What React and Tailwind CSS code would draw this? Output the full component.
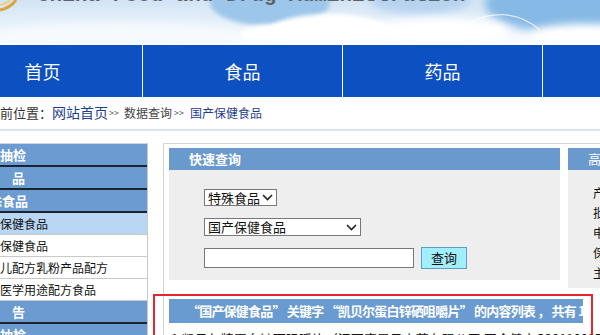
import React from 'react';

const cjk = { fontFamily: '"Noto Sans CJK SC", "Liberation Sans", sans-serif' };

const Chevron = () => (
  <svg width="11" height="7" viewBox="0 0 11 7" className="shrink-0">
    <path d="M1 1l4.5 4.5L10 1" fill="none" stroke="#222" strokeWidth="1.6" />
  </svg>
);

const Banner = () => (
  <div className="relative h-[45px] overflow-hidden">
    <svg width="600" height="45" viewBox="0 0 600 45" className="absolute inset-0">
      <defs>
        <linearGradient id="sky" x1="0" y1="0" x2="0" y2="1">
          <stop offset="0" stopColor="#d2e3f4" />
          <stop offset="0.6" stopColor="#eaf3fb" />
          <stop offset="1" stopColor="#ffffff" />
        </linearGradient>
        <filter id="soft" x="-50%" y="-50%" width="200%" height="200%">
          <feGaussianBlur stdDeviation="4" />
        </filter>
        <filter id="soft2" x="-50%" y="-50%" width="200%" height="200%">
          <feGaussianBlur stdDeviation="2" />
        </filter>
      </defs>
      <rect width="600" height="45" fill="url(#sky)" />
      <ellipse cx="270" cy="2" rx="60" ry="24" fill="#9cc6ea" filter="url(#soft2)" />
      <ellipse cx="560" cy="4" rx="75" ry="28" fill="#86b9e5" filter="url(#soft)" />
      <ellipse cx="420" cy="0" rx="50" ry="14" fill="#b5d3ef" filter="url(#soft)" />
      <ellipse cx="330" cy="30" rx="60" ry="16" fill="#ffffff" filter="url(#soft2)" />
      <ellipse cx="280" cy="34" rx="40" ry="10" fill="#ffffff" filter="url(#soft2)" />
      <ellipse cx="440" cy="32" rx="70" ry="14" fill="#ffffff" filter="url(#soft)" />
      <ellipse cx="580" cy="36" rx="50" ry="12" fill="#ffffff" filter="url(#soft)" />
      <ellipse cx="120" cy="36" rx="120" ry="12" fill="#f6fafd" filter="url(#soft)" />
      <path d="M440 40 Q500 -5 540 30" fill="none" stroke="#ffffff" strokeWidth="1.2" opacity="0.7" />
      <path d="M0 10 Q10 8 16 0" fill="none" stroke="#d9a640" strokeWidth="3" />
      <path d="M0 5 Q6 4 10 0" fill="none" stroke="#f0cf7a" strokeWidth="2" />
    </svg>
    <div
      className="absolute left-[37px] top-[-20px] text-[21px] font-bold text-[#5f6367] whitespace-nowrap"
      style={{ fontFamily: '"Liberation Mono", monospace' }}
    >
      China Food and Drug Administration
    </div>
  </div>
);

const navItems = ['首页', '食品', '药品', '医疗器械'];

const Nav = () => (
  <div className="flex h-[52px] bg-[#0d50c1] -ml-[57px] w-[800px]">
    {navItems.map((n) => (
      <div
        key={n}
        className="w-[200px] shrink-0 border-r border-white flex items-center justify-center text-white text-[18px]"
      >
        {n}
      </div>
    ))}
  </div>
);

const Breadcrumb = () => (
  <div className="relative h-[34px] border-b-2 border-[#d9e5f1] flex items-center -ml-[13px] pb-[1px]">
    <span className="text-[13px] text-[#333]">当前位置：</span>
    <span className="text-[14px] text-[#1f3e91]">网站首页</span>
    <span className="text-[9px] text-[#555] ml-[1px] mr-[5px]">&gt;&gt;</span>
    <span className="text-[12px] text-[#444]">数据查询</span>
    <span className="text-[9px] text-[#555] ml-[2px] mr-[6px]">&gt;&gt;</span>
    <span className="text-[12px] text-[#1f3e91]">国产保健食品</span>
    <span className="absolute right-[-13px] top-[12px] w-[4px] h-[9px] border border-[#333]" />
  </div>
);

const sideRows = [
  { t: '监督抽检', h: true, pl: 'pl-[16px]' },
  { t: '药　品', h: true, pl: 'pl-[28px]' },
  { t: '特殊食品', h: true, pl: 'pl-[18px]' },
  { t: '国产保健食品', sel: true },
  { t: '进口保健食品' },
  { t: '婴幼儿配方乳粉产品配方' },
  { t: '特殊医学用途配方食品' },
  { t: '公　告', h: true, pl: 'pl-[28px]' },
  { t: '监督抽检', h: true, pl: 'pl-[16px]' },
];

const Sidebar = () => (
  <div className="w-[190px] -ml-[42px] shrink-0 border-t border-[#d5d5d5] border-r border-r-[#c8c8c8]">
    {sideRows.map((r, i) =>
      r.h ? (
        <div
          key={i}
          className={`h-[23px] bg-[#6b9bd1] border-b-2 border-[#1a2430] text-white font-bold text-[13px] flex items-center ${r.pl}`}
        >
          {r.t}
        </div>
      ) : (
        <div
          key={i}
          className={`h-[22px] border-b border-[#c9c9c9] text-[12px] text-[#111] flex items-center pl-[18px] ${
            r.sel ? 'bg-[#b9d6f4]' : 'bg-white'
          }`}
        >
          {r.t}
        </div>
      )
    )}
  </div>
);

const QuickPanel = () => (
  <div className="w-[391px] shrink-0">
    <div className="h-[22px] bg-[#6999cd] text-white font-bold text-[13px] flex items-center pl-[20px]">快速查询</div>
    <div className="h-[110px] bg-[#eeeeee] pl-[35px] pt-[19px] flex flex-col gap-[12px]">
      <div className="w-[73px] h-[17px] bg-white border border-[#777] flex items-center justify-between px-[3px] text-[13px] text-[#111]">
        <span>特殊食品</span>
        <Chevron />
      </div>
      <div className="w-[157px] h-[18px] bg-white border border-[#777] flex items-center justify-between px-[3px] text-[13px] text-[#111]">
        <span>国产保健食品</span>
        <Chevron />
      </div>
      <div className="flex items-center gap-[7px] -mt-[1px]">
        <div className="w-[210px] h-[20px] bg-white border border-[#777]" />
        <div className="w-[46px] h-[22px] bg-[#a3eefb] border border-[#5b9fc4] flex items-center justify-center text-[13px] text-[#111]">
          查询
        </div>
      </div>
    </div>
  </div>
);

const AdvPanel = () => (
  <div className="w-[200px] shrink-0">
    <div className="h-[22px] bg-[#6999cd] text-white text-[13px] flex items-center pl-[20px]">高级查询</div>
    <div className="h-[118px] bg-[#eeeeee] pl-[25px] pt-[14px] flex flex-col gap-[3px] text-[12px] text-[#111] leading-[17px]">
      <div>产品名称：</div>
      <div>批准文号：</div>
      <div>申请人：</div>
      <div>保健功能：</div>
      <div>主要原料：</div>
    </div>
  </div>
);

export default function App() {
  return (
    <div className="relative w-[600px] h-[335px] overflow-hidden bg-white" style={cjk}>
      <Banner />
      <Nav />
      <Breadcrumb />
      <div className="flex gap-[15px] mt-[12px]">
        <Sidebar />
        <div className="w-[600px] shrink-0 border-l border-t border-[#d3d3d3] pl-[5px] pt-[4px]">
          <div className="flex gap-[8px] items-start">
            <QuickPanel />
            <AdvPanel />
          </div>
          <div className="mt-[11px] w-[414px] h-[24px] bg-[#6a9bd0] text-white font-bold text-[13px] tracking-[-0.8px] flex items-center pl-[18px] whitespace-nowrap overflow-hidden">
            “国产保健食品” 关键字 “凯贝尔蛋白锌硒咀嚼片” 的内容列表 ， 共有 1 条记录
          </div>
          <div className="pl-[2px] pt-[7px] text-[13px] leading-[18px] text-[#111] whitespace-nowrap">
            1.凯贝尔牌蛋白锌硒咀嚼片（江西康恩贝中药有限公司 国食健字G20110097）
          </div>
        </div>
      </div>
      <div className="absolute left-[153px] top-[294px] w-[440px] h-[80px] border-2 border-[#e6252d]" />
    </div>
  );
}
